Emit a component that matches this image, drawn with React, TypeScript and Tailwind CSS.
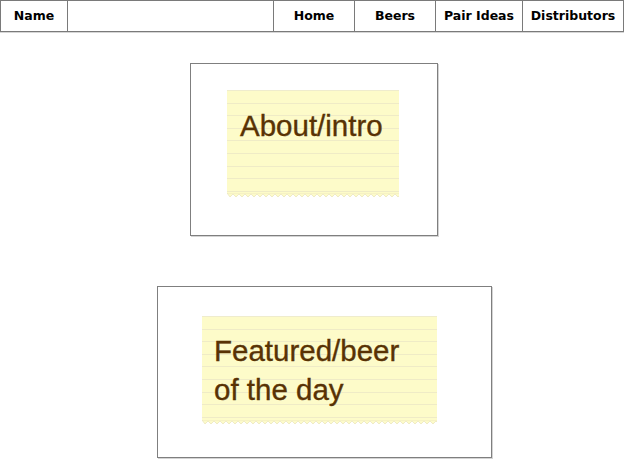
import React from "react";

const navFont = { fontFamily: '"DejaVu Sans", Verdana, sans-serif' };

function Jagged({ width }: { width: number }) {
  const period = 6;
  const n = Math.ceil(width / period);
  let pts = `M0 0 `;
  for (let i = 0; i < n; i++) {
    const x = i * period;
    pts += `L${x + period / 2} 4 L${x + period} 1 `;
  }
  pts += `L${width} 0 Z`;
  return (
    <svg width={width} height={5} viewBox={`0 0 ${width} 5`} className="block">
      <path d={pts} fill="#fdfbc9" stroke="#ebe6bf" strokeWidth={0.8} />
    </svg>
  );
}

function Note({ width, height, children, pt, pl }: { width: number; height: number; children: React.ReactNode; pt: string; pl: string }) {
  return (
    <div className="flex flex-col" style={{ width }}>
      <div
        className={`border-t border-[#efeccd] bg-[repeating-linear-gradient(to_bottom,#fdfbc9_0px,#fdfbc9_11.6px,#efebc6_11.6px,#efebc6_12.6px)] text-[29.5px] leading-[39px] text-[#583204] [-webkit-text-stroke:0.35px_#583204] ${pt} ${pl}`}
        style={{ height, fontFamily: '"Liberation Sans", Arial, sans-serif' }}
      >
        {children}
      </div>
      <Jagged width={width} />
    </div>
  );
}

export default function App() {
  return (
    <div className="w-[624px] h-[460px] bg-white overflow-hidden">
      <div
        className="flex h-[32px] border border-[#7a7a7a] text-[12.5px] font-bold text-black shadow-[0_1px_0_#d6d6d6]"
        style={navFont}
      >
        <div className="w-[67px] flex items-center justify-center border-r border-[#7a7a7a]">Name</div>
        <div className="w-[206px] border-r border-[#7a7a7a]"></div>
        <div className="w-[81px] flex items-center justify-center border-r border-[#7a7a7a]">Home</div>
        <div className="w-[81px] flex items-center justify-center border-r border-[#7a7a7a]">Beers</div>
        <div className="w-[87px] flex items-center justify-center border-r border-[#7a7a7a]">Pair Ideas</div>
        <div className="flex-1 flex items-center justify-center">Distributors</div>
      </div>

      <div className="flex flex-col">
        <div className="ml-[190px] mt-[31px] w-[248px] h-[173px] border border-[#7f7f7f] shadow-[1px_1px_0_#d4d4d4] pl-[36px] pt-[26px]">
          <Note width={172} height={103} pt="pt-[15px]" pl="pl-[13px]">
            About/intro
          </Note>
        </div>

        <div className="ml-[157px] mt-[50px] w-[335px] h-[172px] border border-[#7f7f7f] shadow-[1px_1px_0_#d4d4d4] pl-[44px] pt-[29px]">
          <Note width={235} height={104} pt="pt-[14px]" pl="pl-[12px]">
            Featured/beer
            <br />
            of the day
          </Note>
        </div>
      </div>
    </div>
  );
}
